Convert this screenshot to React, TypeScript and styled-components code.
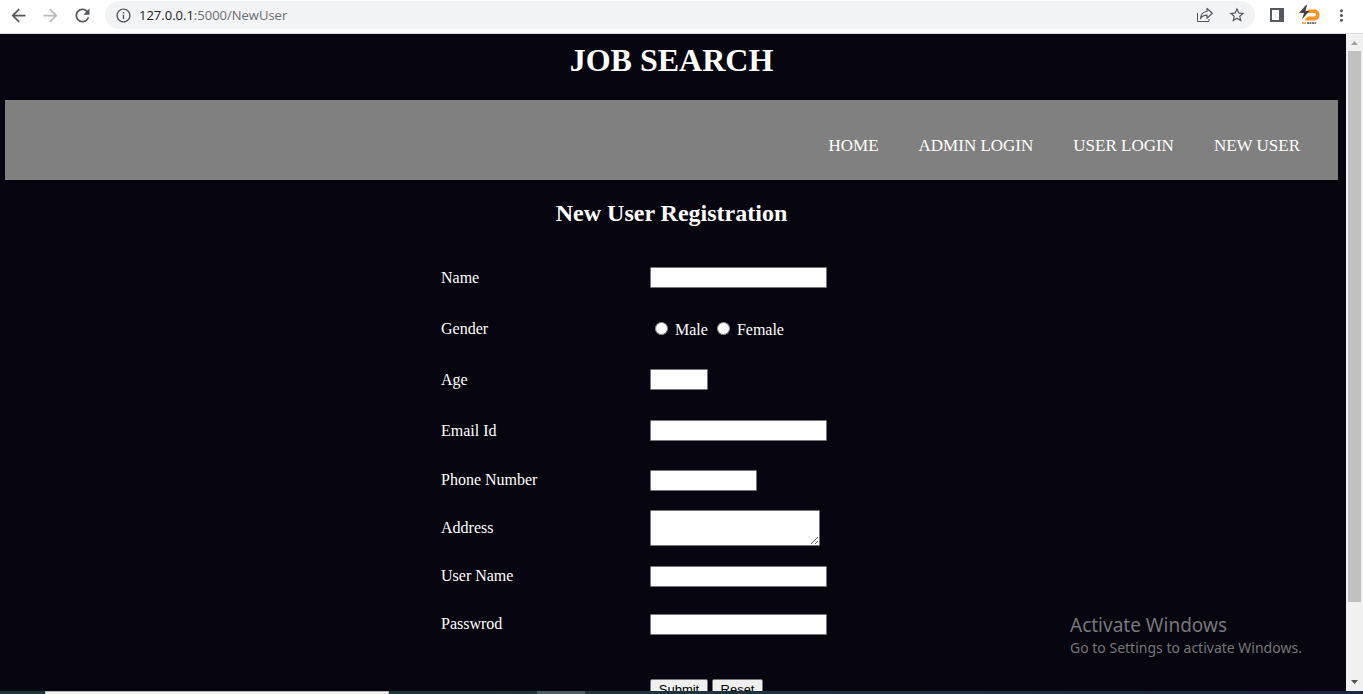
import React from "react";
import styled, { createGlobalStyle } from "styled-components";
import { MdArrowBack, MdArrowForward, MdRefresh, MdInfoOutline, MdStarBorder, MdMoreVert } from "react-icons/md";

const GlobalStyle = createGlobalStyle`
  * { box-sizing: border-box; }
  body { margin: 0; background: #07050f; }
`;

const Window = styled.div`
  display: flex;
  flex-direction: column;
  height: 100vh;
  overflow: hidden;
  position: relative;
`;

const Toolbar = styled.header`
  display: flex;
  align-items: center;
  flex: none;
  height: 34px;
  padding: 1px 6px 4px 2px;
  background: #fff;
  border-bottom: 1px solid #dadce0;
`;

const IconButton = styled.button<{ $muted?: boolean }>`
  display: flex;
  align-items: center;
  justify-content: center;
  flex: none;
  width: 32px;
  height: 28px;
  padding: 0;
  border: 0;
  background: none;
  color: ${(p) => (p.$muted ? "#b9bbbd" : "#55585c")};
`;

const NavButtons = styled.div`
  display: flex;
`;

const AddressBar = styled.div`
  display: flex;
  align-items: center;
  flex: 1;
  height: 28px;
  margin: 0 6px 0 7px;
  padding: 0 2px 0 10px;
  border-radius: 14px;
  background: #f1f3f4;
  color: #55585c;
`;

const Url = styled.span`
  flex: 1;
  margin-left: 7px;
  font: 13px/20px "Open Sans", sans-serif;
  color: #6a6d71;
`;

const Host = styled.span`
  color: #202124;
`;

const Viewport = styled.div`
  display: flex;
  flex: 1;
  min-height: 0;
`;

const Page = styled.main`
  flex: 1;
  min-width: 0;
  overflow: hidden;
  padding: 8px 8px 0 5px;
  background: #07050f;
  color: #fff;
  font: 16px/18px "Liberation Serif", serif;
`;

const Title = styled.h1`
  margin: 0 0 22px;
  font-size: 32px;
  line-height: 36px;
  text-align: center;
`;

const Menu = styled.nav`
  display: flex;
  justify-content: flex-end;
  align-items: flex-end;
  gap: 40px;
  height: 80px;
  padding: 0 38px 24px;
  background: #808080;
`;

const MenuLink = styled.a`
  color: #fff;
  font-size: 17px;
  line-height: 20px;
  text-decoration: none;
`;

const Subtitle = styled.h2`
  margin: 20px 0 26px;
  font-size: 24px;
  line-height: 26px;
  text-align: center;
`;

const FormTable = styled.table`
  width: 461px;
  margin: 0 auto;
  border-collapse: collapse;

  td { padding: 0; }
  td:first-child { width: 209px; }
`;

const Row = styled.tr<{ $height: number }>`
  height: ${(p) => p.$height}px;
`;

const TextInput = styled.input<{ $width?: number }>`
  display: block;
  width: ${(p) => p.$width ?? 177}px;
  height: 21px;
  padding: 1px 2px;
  border: 1px solid #767676;
  border-radius: 1px;
  background: #fff;
  font: 13px "Liberation Sans", sans-serif;
`;

const AddressInput = styled.textarea`
  display: block;
  width: 170px;
  height: 36px;
  padding: 2px;
  border: 1px solid #767676;
  border-radius: 1px;
  background: #fff;
`;

const Radio = styled.input`
  margin: 3px 3px 0 5px;
`;

const Actions = styled.div`
  display: flex;
  gap: 4px;
`;

const FormButton = styled.button<{ $width: number }>`
  width: ${(p) => p.$width}px;
  height: 21px;
  padding: 0;
  border: 1px solid #767676;
  border-radius: 2px;
  background: #efefef;
  color: #000;
  font: 13px/15px "Liberation Sans", sans-serif;
`;

const Scrollbar = styled.div`
  display: flex;
  flex-direction: column;
  align-items: center;
  flex: none;
  width: 17px;
  background: #f1f1f1;
`;

const ScrollArrow = styled.svg`
  flex: none;
  width: 17px;
  height: 17px;
`;

const ScrollTrack = styled.div`
  display: flex;
  flex-direction: column;
  flex: 1;
  width: 13px;

  &::after {
    content: "";
    flex: 3;
  }
`;

const ScrollThumb = styled.div`
  flex: 23;
  background: #c1c1c1;
`;

const Taskbar = styled.footer`
  display: flex;
  flex: none;
  height: 3px;
  padding-left: 45px;
  background: linear-gradient(90deg, #1f363d, #1d343f 55%, #1b2745);
`;

const TaskbarSearch = styled.div`
  width: 344px;
  border: 1px solid #b5b5b5;
  border-bottom: 0;
  background: #f2f2f2;
`;

const TaskbarItem = styled.div`
  width: 48px;
  margin-left: 148px;
  background: #4b5c66;
`;

const Watermark = styled.aside`
  position: absolute;
  right: 57px;
  bottom: 36px;
  min-width: 236px;
  color: #77777b;
  font: 14px/20px "Noto Sans", sans-serif;
`;

const WatermarkTitle = styled.div`
  font-size: 19px;
  line-height: 26px;
`;

const ShareIcon = () => (
  <svg width="16" height="16" viewBox="0 0 16 16" fill="none" stroke="currentColor" strokeLinejoin="round">
    <path d="M.5 6v8.500h11.500v-2.500" />
    <path d="M10 1.500v3C6 4.800 3.800 7.200 3.500 11.500 5 9 7 8.200 10 8.200v3L15.300 6.300z" strokeWidth="1.200" />
  </svg>
);

const PanelIcon = () => (
  <svg width="14" height="14" viewBox="0 0 14 14" fill="currentColor">
    <path fillRule="evenodd" d="M0 0h14v14H0zM2 2v10h7V2z" />
  </svg>
);

const ExtensionLogo = () => (
  <svg width="22" height="20" viewBox="0 0 22 20">
    <path d="M10 4.500h6.500a5 5 0 0 1 5 5v1a5 5 0 0 1-5 5H6.500l3-4h6.500a2 2 0 0 0 2-2 1.500 1.500 0 0 0-1.500-1.500H9z" fill="#f79321" />
    <path d="M8 0L1 8h5L4 14.500 11.500 6H7.500L9 0z" fill="#444" />
    <path d="M4 18h4" stroke="#f7a95c" strokeWidth="2" />
    <path d="M9 18h9" stroke="#777" strokeWidth="2" strokeDasharray="2 .5" />
  </svg>
);

type Field = { id: string; label: string; height: number; width?: number; kind?: string };

const fields: Field[] = [
  { id: "name", label: "Name", height: 51 },
  { id: "gender", label: "Gender", height: 51, kind: "gender" },
  { id: "age", label: "Age", height: 51, width: 58 },
  { id: "email", label: "Email Id", height: 51 },
  { id: "phone", label: "Phone Number", height: 48, width: 107 },
  { id: "address", label: "Address", height: 48, kind: "textarea" },
  { id: "username", label: "User Name", height: 48 },
  { id: "password", label: "Passwrod", height: 48, kind: "password" },
];

const FieldControl = ({ field }: { field: Field }) => {
  if (field.kind === "gender") {
    return (
      <div role="radiogroup" aria-labelledby="gender-label">
        <Radio type="radio" name="gender" id="male" /> <label htmlFor="male">Male</label>{" "}
        <Radio type="radio" name="gender" id="female" /> <label htmlFor="female">Female</label>
      </div>
    );
  }
  if (field.kind === "textarea") return <AddressInput id={field.id} />;
  return <TextInput id={field.id} type={field.kind ?? "text"} $width={field.width} />;
};

export default function App() {
  return (
    <Window>
      <GlobalStyle />
      <Toolbar>
        <NavButtons>
          <IconButton aria-label="Back"><MdArrowBack size={21} /></IconButton>
          <IconButton aria-label="Forward" $muted><MdArrowForward size={21} /></IconButton>
          <IconButton aria-label="Reload"><MdRefresh size={21} /></IconButton>
        </NavButtons>
        <AddressBar>
          <MdInfoOutline size={17} />
          <Url><Host>127.0.0.1</Host>:5000/NewUser</Url>
          <IconButton aria-label="Share"><ShareIcon /></IconButton>
          <IconButton aria-label="Bookmark"><MdStarBorder size={18} /></IconButton>
        </AddressBar>
        <IconButton aria-label="Side panel"><PanelIcon /></IconButton>
        <IconButton aria-label="Extension"><ExtensionLogo /></IconButton>
        <IconButton aria-label="More"><MdMoreVert size={19} /></IconButton>
      </Toolbar>
      <Viewport>
        <Page>
          <Title>JOB SEARCH</Title>
          <Menu>
            <MenuLink href="#home">HOME</MenuLink>
            <MenuLink href="#admin">ADMIN LOGIN</MenuLink>
            <MenuLink href="#user">USER LOGIN</MenuLink>
            <MenuLink href="#new">NEW USER</MenuLink>
          </Menu>
          <Subtitle>New User Registration</Subtitle>
          <form onSubmit={(e) => e.preventDefault()}>
            <FormTable>
              <tbody>
                {fields.map((field) => (
                  <Row key={field.id} $height={field.height}>
                    <td>
                      {field.kind === "gender" ? (
                        <span id="gender-label">{field.label}</span>
                      ) : (
                        <label htmlFor={field.id}>{field.label}</label>
                      )}
                    </td>
                    <td><FieldControl field={field} /></td>
                  </Row>
                ))}
                <Row $height={82}>
                  <td />
                  <td>
                    <Actions>
                      <FormButton type="submit" $width={58}>Submit</FormButton>
                      <FormButton type="reset" $width={51}>Reset</FormButton>
                    </Actions>
                  </td>
                </Row>
              </tbody>
            </FormTable>
          </form>
        </Page>
        <Scrollbar>
          <ScrollArrow viewBox="0 0 17 17"><path d="M5 11l3.500-4 3.500 4z" fill="#a3a3a3" /></ScrollArrow>
          <ScrollTrack><ScrollThumb /></ScrollTrack>
          <ScrollArrow viewBox="0 0 17 17"><path d="M5 6l3.500 4L12 6z" fill="#505050" /></ScrollArrow>
        </Scrollbar>
      </Viewport>
      <Taskbar>
        <TaskbarSearch />
        <TaskbarItem />
      </Taskbar>
      <Watermark>
        <WatermarkTitle>Activate Windows</WatermarkTitle>
        Go to Settings to activate Windows.
      </Watermark>
    </Window>
  );
}
